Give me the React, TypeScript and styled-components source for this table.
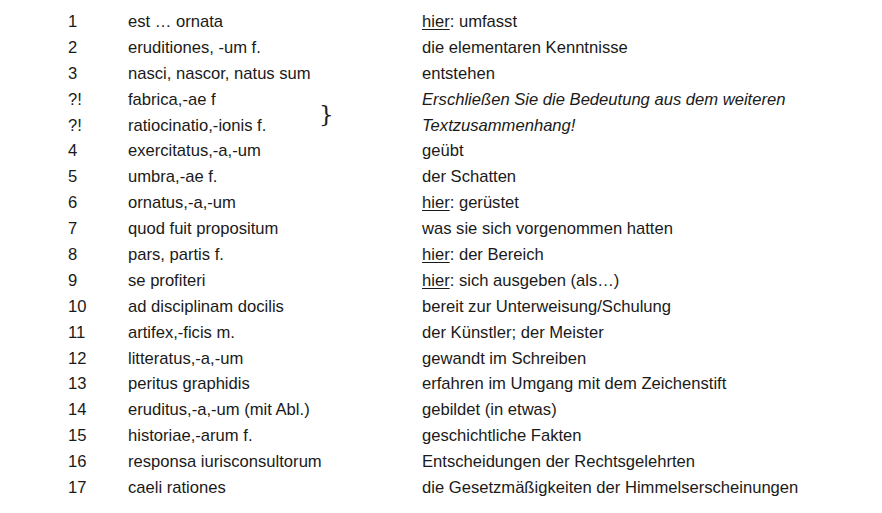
import React from "react";
import styled, { createGlobalStyle } from "styled-components";

const Global = createGlobalStyle`
  html, body { margin: 0; padding: 0; background: #fff; }
  body { margin: 8px; }
`;

const Table = styled.div`
  display: grid;
  grid-template-columns: 60px 194px 100px auto;
  grid-auto-rows: 25.9px;
  padding: 1px 0 0 60px;
  font-family: "Liberation Sans", Arial, sans-serif;
  font-size: 16.6px;
  color: #1a1a1a;
  line-height: 25.9px;
`;

const Cell = styled.div<{ $italic?: boolean }>`
  white-space: nowrap;
  font-style: ${(p) => (p.$italic ? "italic" : "normal")};
`;

const Latin = styled(Cell)`
  grid-column: 2 / span 2;
`;

const German = styled(Cell)`
  grid-column: 4;
`;

const Brace = styled.div`
  grid-column: 3;
  grid-row: 4 / span 2;
  align-self: center;
  font-family: "DejaVu Serif", serif;
  font-size: 23px;
  line-height: 26px;
  color: #1a1a1a;
  margin-left: -3px;
  margin-top: 2px;
`;

const Hier = styled.span`
  text-decoration: underline;
  text-underline-offset: 2px;
`;

type Row = { n: string; la: string; de: string; hier?: boolean; italic?: boolean };

const rows: Row[] = [
  { n: "1", la: "est … ornata", de: "umfasst", hier: true },
  { n: "2", la: "eruditiones, -um f.", de: "die elementaren Kenntnisse" },
  { n: "3", la: "nasci, nascor, natus sum", de: "entstehen" },
  { n: "?!", la: "fabrica,-ae f", de: "Erschließen Sie die Bedeutung aus dem weiteren", italic: true },
  { n: "?!", la: "ratiocinatio,-ionis f.", de: "Textzusammenhang!", italic: true },
  { n: "4", la: "exercitatus,-a,-um", de: "geübt" },
  { n: "5", la: "umbra,-ae f.", de: "der Schatten" },
  { n: "6", la: "ornatus,-a,-um", de: "gerüstet", hier: true },
  { n: "7", la: "quod fuit propositum", de: "was sie sich vorgenommen hatten" },
  { n: "8", la: "pars, partis f.", de: "der Bereich", hier: true },
  { n: "9", la: "se profiteri", de: "sich ausgeben (als…)", hier: true },
  { n: "10", la: "ad disciplinam docilis", de: "bereit zur Unterweisung/Schulung" },
  { n: "11", la: "artifex,-ficis m.", de: "der Künstler; der Meister" },
  { n: "12", la: "litteratus,-a,-um", de: "gewandt im Schreiben" },
  { n: "13", la: "peritus graphidis", de: "erfahren im Umgang mit dem Zeichenstift" },
  { n: "14", la: "eruditus,-a,-um (mit Abl.)", de: "gebildet (in etwas)" },
  { n: "15", la: "historiae,-arum f.", de: "geschichtliche Fakten" },
  { n: "16", la: "responsa iurisconsultorum", de: "Entscheidungen der Rechtsgelehrten" },
  { n: "17", la: "caeli rationes", de: "die Gesetzmäßigkeiten der Himmelserscheinungen" },
];

export default function App() {
  return (
    <>
      <Global />
      <Table>
        {rows.map((r, i) => (
          <React.Fragment key={i}>
            <Cell style={{ gridRow: i + 1 }}>{r.n}</Cell>
            <Latin style={{ gridRow: i + 1 }}>{r.la}</Latin>
            <German style={{ gridRow: i + 1 }} $italic={r.italic}>
              {r.hier ? (
                <>
                  <Hier>hier</Hier>: {r.de}
                </>
              ) : (
                r.de
              )}
            </German>
          </React.Fragment>
        ))}
        <Brace>{"}"}</Brace>
      </Table>
    </>
  );
}
